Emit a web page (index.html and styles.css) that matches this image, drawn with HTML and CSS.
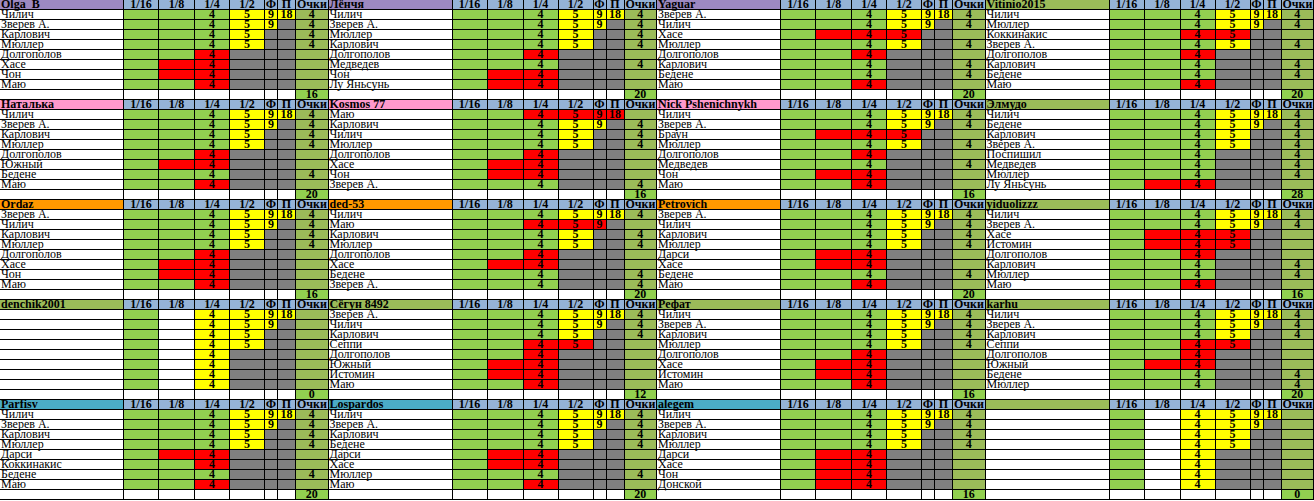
FILE: index.html
```html
<!DOCTYPE html>
<html lang="ru">
<head>
<meta charset="utf-8">
<title>Прогнозы</title>
<link rel="stylesheet" href="styles.css">
</head>
<body>
<div class="sheet">

<table class="blk">
<tr><th class="n pu">Olga_B</th><th>1/16</th><th>1/8</th><th>1/4</th><th>1/2</th><th>Ф</th><th>П</th><th>Очки</th></tr>
<tr><td class="n">Чилич</td><td class="g"></td><td class="g"></td><td class="g">4</td><td class="y">5</td><td class="y">9</td><td class="y">18</td><td class="o">4</td></tr>
<tr><td class="n">Зверев А.</td><td class="g"></td><td class="g"></td><td class="g">4</td><td class="y">5</td><td class="y">9</td><td class="k"></td><td class="o">4</td></tr>
<tr><td class="n">Карлович</td><td class="g"></td><td class="g"></td><td class="g">4</td><td class="y">5</td><td class="k"></td><td class="k"></td><td class="o">4</td></tr>
<tr><td class="n">Мюллер</td><td class="g"></td><td class="g"></td><td class="g">4</td><td class="y">5</td><td class="k"></td><td class="k"></td><td class="o">4</td></tr>
<tr><td class="n">Долгополов</td><td class="g"></td><td class="g"></td><td class="r">4</td><td class="k"></td><td class="k"></td><td class="k"></td><td class="o"></td></tr>
<tr><td class="n">Хасе</td><td class="g"></td><td class="r"></td><td class="r">4</td><td class="k"></td><td class="k"></td><td class="k"></td><td class="o"></td></tr>
<tr><td class="n">Чон</td><td class="g"></td><td class="r"></td><td class="r">4</td><td class="k"></td><td class="k"></td><td class="k"></td><td class="o"></td></tr>
<tr><td class="n">Маю</td><td class="g"></td><td class="g"></td><td class="r">4</td><td class="k"></td><td class="k"></td><td class="k"></td><td class="o"></td></tr>
<tr><td class="n"></td><td></td><td></td><td></td><td></td><td></td><td></td><td class="t">16</td></tr>
</table>

<table class="blk">
<tr><th class="n pu">Лёнчя</th><th>1/16</th><th>1/8</th><th>1/4</th><th>1/2</th><th>Ф</th><th>П</th><th>Очки</th></tr>
<tr><td class="n">Чилич</td><td class="g"></td><td class="g"></td><td class="g">4</td><td class="y">5</td><td class="y">9</td><td class="y">18</td><td class="o">4</td></tr>
<tr><td class="n">Зверев А.</td><td class="g"></td><td class="g"></td><td class="g">4</td><td class="y">5</td><td class="y">9</td><td class="k"></td><td class="o">4</td></tr>
<tr><td class="n">Мюллер</td><td class="g"></td><td class="g"></td><td class="g">4</td><td class="y">5</td><td class="k"></td><td class="k"></td><td class="o">4</td></tr>
<tr><td class="n">Карлович</td><td class="g"></td><td class="g"></td><td class="g">4</td><td class="y">5</td><td class="k"></td><td class="k"></td><td class="o">4</td></tr>
<tr><td class="n">Долгополов</td><td class="g"></td><td class="g"></td><td class="r">4</td><td class="k"></td><td class="k"></td><td class="k"></td><td class="o"></td></tr>
<tr><td class="n">Медведев</td><td class="g"></td><td class="g"></td><td class="g">4</td><td class="k"></td><td class="k"></td><td class="k"></td><td class="o">4</td></tr>
<tr><td class="n">Чон</td><td class="g"></td><td class="r"></td><td class="r">4</td><td class="k"></td><td class="k"></td><td class="k"></td><td class="o"></td></tr>
<tr><td class="n">Лу Яньсунь</td><td class="g"></td><td class="r"></td><td class="r">4</td><td class="k"></td><td class="k"></td><td class="k"></td><td class="o"></td></tr>
<tr><td class="n"></td><td></td><td></td><td></td><td></td><td></td><td></td><td class="t">20</td></tr>
</table>

<table class="blk">
<tr><th class="n pu">Yaguar</th><th>1/16</th><th>1/8</th><th>1/4</th><th>1/2</th><th>Ф</th><th>П</th><th>Очки</th></tr>
<tr><td class="n">Зверев А.</td><td class="g"></td><td class="g"></td><td class="g">4</td><td class="y">5</td><td class="y">9</td><td class="y">18</td><td class="o">4</td></tr>
<tr><td class="n">Чилич</td><td class="g"></td><td class="g"></td><td class="g">4</td><td class="y">5</td><td class="y">9</td><td class="k"></td><td class="o">4</td></tr>
<tr><td class="n">Хасе</td><td class="g"></td><td class="r"></td><td class="r">4</td><td class="r">5</td><td class="k"></td><td class="k"></td><td class="o"></td></tr>
<tr><td class="n">Мюллер</td><td class="g"></td><td class="g"></td><td class="g">4</td><td class="y">5</td><td class="k"></td><td class="k"></td><td class="o">4</td></tr>
<tr><td class="n">Долгополов</td><td class="g"></td><td class="g"></td><td class="r">4</td><td class="k"></td><td class="k"></td><td class="k"></td><td class="o"></td></tr>
<tr><td class="n">Карлович</td><td class="g"></td><td class="g"></td><td class="g">4</td><td class="k"></td><td class="k"></td><td class="k"></td><td class="o">4</td></tr>
<tr><td class="n">Бедене</td><td class="g"></td><td class="g"></td><td class="g">4</td><td class="k"></td><td class="k"></td><td class="k"></td><td class="o">4</td></tr>
<tr><td class="n">Маю</td><td class="g"></td><td class="g"></td><td class="r">4</td><td class="k"></td><td class="k"></td><td class="k"></td><td class="o"></td></tr>
<tr><td class="n"></td><td></td><td></td><td></td><td></td><td></td><td></td><td class="t">20</td></tr>
</table>

<table class="blk">
<tr><th class="n ol">Vitinio2015</th><th>1/16</th><th>1/8</th><th>1/4</th><th>1/2</th><th>Ф</th><th>П</th><th>Очки</th></tr>
<tr><td class="n">Чилич</td><td class="g"></td><td class="g"></td><td class="g">4</td><td class="y">5</td><td class="y">9</td><td class="y">18</td><td class="o">4</td></tr>
<tr><td class="n">Мюллер</td><td class="g"></td><td class="g"></td><td class="g">4</td><td class="y">5</td><td class="y">9</td><td class="k"></td><td class="o">4</td></tr>
<tr><td class="n">Коккинакис</td><td class="g"></td><td class="g"></td><td class="r">4</td><td class="r">5</td><td class="k"></td><td class="k"></td><td class="o"></td></tr>
<tr><td class="n">Зверев А.</td><td class="g"></td><td class="g"></td><td class="g">4</td><td class="y">5</td><td class="k"></td><td class="k"></td><td class="o">4</td></tr>
<tr><td class="n">Долгополов</td><td class="g"></td><td class="g"></td><td class="r">4</td><td class="k"></td><td class="k"></td><td class="k"></td><td class="o"></td></tr>
<tr><td class="n">Карлович</td><td class="g"></td><td class="g"></td><td class="g">4</td><td class="k"></td><td class="k"></td><td class="k"></td><td class="o">4</td></tr>
<tr><td class="n">Бедене</td><td class="g"></td><td class="g"></td><td class="g">4</td><td class="k"></td><td class="k"></td><td class="k"></td><td class="o">4</td></tr>
<tr><td class="n">Маю</td><td class="g"></td><td class="g"></td><td class="r">4</td><td class="k"></td><td class="k"></td><td class="k"></td><td class="o"></td></tr>
<tr><td class="n"></td><td></td><td></td><td></td><td></td><td></td><td></td><td class="t">20</td></tr>
</table>

<table class="blk">
<tr><th class="n pk">Наталька</th><th>1/16</th><th>1/8</th><th>1/4</th><th>1/2</th><th>Ф</th><th>П</th><th>Очки</th></tr>
<tr><td class="n">Чилич</td><td class="g"></td><td class="g"></td><td class="g">4</td><td class="y">5</td><td class="y">9</td><td class="y">18</td><td class="o">4</td></tr>
<tr><td class="n">Зверев А.</td><td class="g"></td><td class="g"></td><td class="g">4</td><td class="y">5</td><td class="y">9</td><td class="k"></td><td class="o">4</td></tr>
<tr><td class="n">Карлович</td><td class="g"></td><td class="g"></td><td class="g">4</td><td class="y">5</td><td class="k"></td><td class="k"></td><td class="o">4</td></tr>
<tr><td class="n">Мюллер</td><td class="g"></td><td class="g"></td><td class="g">4</td><td class="y">5</td><td class="k"></td><td class="k"></td><td class="o">4</td></tr>
<tr><td class="n">Долгополов</td><td class="g"></td><td class="g"></td><td class="r">4</td><td class="k"></td><td class="k"></td><td class="k"></td><td class="o"></td></tr>
<tr><td class="n">Южный</td><td class="g"></td><td class="r"></td><td class="r">4</td><td class="k"></td><td class="k"></td><td class="k"></td><td class="o"></td></tr>
<tr><td class="n">Бедене</td><td class="g"></td><td class="g"></td><td class="g">4</td><td class="k"></td><td class="k"></td><td class="k"></td><td class="o">4</td></tr>
<tr><td class="n">Маю</td><td class="g"></td><td class="g"></td><td class="r">4</td><td class="k"></td><td class="k"></td><td class="k"></td><td class="o"></td></tr>
<tr><td class="n"></td><td></td><td></td><td></td><td></td><td></td><td></td><td class="t">20</td></tr>
</table>

<table class="blk">
<tr><th class="n pk">Kosmos 77</th><th>1/16</th><th>1/8</th><th>1/4</th><th>1/2</th><th>Ф</th><th>П</th><th>Очки</th></tr>
<tr><td class="n">Маю</td><td class="g"></td><td class="g"></td><td class="r">4</td><td class="r">5</td><td class="r">9</td><td class="r">18</td><td class="o"></td></tr>
<tr><td class="n">Карлович</td><td class="g"></td><td class="g"></td><td class="g">4</td><td class="y">5</td><td class="y">9</td><td class="k"></td><td class="o">4</td></tr>
<tr><td class="n">Чилич</td><td class="g"></td><td class="g"></td><td class="g">4</td><td class="y">5</td><td class="k"></td><td class="k"></td><td class="o">4</td></tr>
<tr><td class="n">Мюллер</td><td class="g"></td><td class="g"></td><td class="g">4</td><td class="y">5</td><td class="k"></td><td class="k"></td><td class="o">4</td></tr>
<tr><td class="n">Долгополов</td><td class="g"></td><td class="g"></td><td class="r">4</td><td class="k"></td><td class="k"></td><td class="k"></td><td class="o"></td></tr>
<tr><td class="n">Хасе</td><td class="g"></td><td class="r"></td><td class="r">4</td><td class="k"></td><td class="k"></td><td class="k"></td><td class="o"></td></tr>
<tr><td class="n">Чон</td><td class="g"></td><td class="r"></td><td class="r">4</td><td class="k"></td><td class="k"></td><td class="k"></td><td class="o"></td></tr>
<tr><td class="n">Зверев А.</td><td class="g"></td><td class="g"></td><td class="g">4</td><td class="k"></td><td class="k"></td><td class="k"></td><td class="o">4</td></tr>
<tr><td class="n"></td><td></td><td></td><td></td><td></td><td></td><td></td><td class="t">16</td></tr>
</table>

<table class="blk">
<tr><th class="n pk">Nick Pshenichnykh</th><th>1/16</th><th>1/8</th><th>1/4</th><th>1/2</th><th>Ф</th><th>П</th><th>Очки</th></tr>
<tr><td class="n">Чилич</td><td class="g"></td><td class="g"></td><td class="g">4</td><td class="y">5</td><td class="y">9</td><td class="y">18</td><td class="o">4</td></tr>
<tr><td class="n">Зверев А.</td><td class="g"></td><td class="g"></td><td class="g">4</td><td class="y">5</td><td class="y">9</td><td class="k"></td><td class="o">4</td></tr>
<tr><td class="n">Браун</td><td class="g"></td><td class="r"></td><td class="r">4</td><td class="r">5</td><td class="k"></td><td class="k"></td><td class="o"></td></tr>
<tr><td class="n">Мюллер</td><td class="g"></td><td class="g"></td><td class="g">4</td><td class="y">5</td><td class="k"></td><td class="k"></td><td class="o">4</td></tr>
<tr><td class="n">Долгополов</td><td class="g"></td><td class="g"></td><td class="r">4</td><td class="k"></td><td class="k"></td><td class="k"></td><td class="o"></td></tr>
<tr><td class="n">Медведев</td><td class="g"></td><td class="g"></td><td class="g">4</td><td class="k"></td><td class="k"></td><td class="k"></td><td class="o">4</td></tr>
<tr><td class="n">Чон</td><td class="g"></td><td class="r"></td><td class="r">4</td><td class="k"></td><td class="k"></td><td class="k"></td><td class="o"></td></tr>
<tr><td class="n">Маю</td><td class="g"></td><td class="g"></td><td class="r">4</td><td class="k"></td><td class="k"></td><td class="k"></td><td class="o"></td></tr>
<tr><td class="n"></td><td></td><td></td><td></td><td></td><td></td><td></td><td class="t">16</td></tr>
</table>

<table class="blk">
<tr><th class="n ol">Элмудо</th><th>1/16</th><th>1/8</th><th>1/4</th><th>1/2</th><th>Ф</th><th>П</th><th>Очки</th></tr>
<tr><td class="n">Чилич</td><td class="g"></td><td class="g"></td><td class="g">4</td><td class="y">5</td><td class="y">9</td><td class="y">18</td><td class="o">4</td></tr>
<tr><td class="n">Бедене</td><td class="g"></td><td class="g"></td><td class="g">4</td><td class="y">5</td><td class="y">9</td><td class="k"></td><td class="o">4</td></tr>
<tr><td class="n">Карлович</td><td class="g"></td><td class="g"></td><td class="g">4</td><td class="y">5</td><td class="k"></td><td class="k"></td><td class="o">4</td></tr>
<tr><td class="n">Зверев А.</td><td class="g"></td><td class="g"></td><td class="g">4</td><td class="y">5</td><td class="k"></td><td class="k"></td><td class="o">4</td></tr>
<tr><td class="n">Поспишил</td><td class="g"></td><td class="g"></td><td class="g">4</td><td class="k"></td><td class="k"></td><td class="k"></td><td class="o">4</td></tr>
<tr><td class="n">Медведев</td><td class="g"></td><td class="g"></td><td class="g">4</td><td class="k"></td><td class="k"></td><td class="k"></td><td class="o">4</td></tr>
<tr><td class="n">Мюллер</td><td class="g"></td><td class="g"></td><td class="g">4</td><td class="k"></td><td class="k"></td><td class="k"></td><td class="o">4</td></tr>
<tr><td class="n">Лу Яньсунь</td><td class="g"></td><td class="r"></td><td class="r">4</td><td class="k"></td><td class="k"></td><td class="k"></td><td class="o"></td></tr>
<tr><td class="n"></td><td></td><td></td><td></td><td></td><td></td><td></td><td class="t">28</td></tr>
</table>

<table class="blk">
<tr><th class="n or">Ordaz</th><th>1/16</th><th>1/8</th><th>1/4</th><th>1/2</th><th>Ф</th><th>П</th><th>Очки</th></tr>
<tr><td class="n">Зверев А.</td><td class="g"></td><td class="g"></td><td class="g">4</td><td class="y">5</td><td class="y">9</td><td class="y">18</td><td class="o">4</td></tr>
<tr><td class="n">Чилич</td><td class="g"></td><td class="g"></td><td class="g">4</td><td class="y">5</td><td class="y">9</td><td class="k"></td><td class="o">4</td></tr>
<tr><td class="n">Карлович</td><td class="g"></td><td class="g"></td><td class="g">4</td><td class="y">5</td><td class="k"></td><td class="k"></td><td class="o">4</td></tr>
<tr><td class="n">Мюллер</td><td class="g"></td><td class="g"></td><td class="g">4</td><td class="y">5</td><td class="k"></td><td class="k"></td><td class="o">4</td></tr>
<tr><td class="n">Долгополов</td><td class="g"></td><td class="g"></td><td class="r">4</td><td class="k"></td><td class="k"></td><td class="k"></td><td class="o"></td></tr>
<tr><td class="n">Хасе</td><td class="g"></td><td class="r"></td><td class="r">4</td><td class="k"></td><td class="k"></td><td class="k"></td><td class="o"></td></tr>
<tr><td class="n">Чон</td><td class="g"></td><td class="r"></td><td class="r">4</td><td class="k"></td><td class="k"></td><td class="k"></td><td class="o"></td></tr>
<tr><td class="n">Маю</td><td class="g"></td><td class="g"></td><td class="r">4</td><td class="k"></td><td class="k"></td><td class="k"></td><td class="o"></td></tr>
<tr><td class="n"></td><td></td><td></td><td></td><td></td><td></td><td></td><td class="t">16</td></tr>
</table>

<table class="blk">
<tr><th class="n or">ded-53</th><th>1/16</th><th>1/8</th><th>1/4</th><th>1/2</th><th>Ф</th><th>П</th><th>Очки</th></tr>
<tr><td class="n">Чилич</td><td class="g"></td><td class="g"></td><td class="g">4</td><td class="y">5</td><td class="y">9</td><td class="y">18</td><td class="o">4</td></tr>
<tr><td class="n">Маю</td><td class="g"></td><td class="g"></td><td class="r">4</td><td class="r">5</td><td class="r">9</td><td class="k"></td><td class="o"></td></tr>
<tr><td class="n">Карлович</td><td class="g"></td><td class="g"></td><td class="g">4</td><td class="y">5</td><td class="k"></td><td class="k"></td><td class="o">4</td></tr>
<tr><td class="n">Мюллер</td><td class="g"></td><td class="g"></td><td class="g">4</td><td class="y">5</td><td class="k"></td><td class="k"></td><td class="o">4</td></tr>
<tr><td class="n">Долгополов</td><td class="g"></td><td class="g"></td><td class="r">4</td><td class="k"></td><td class="k"></td><td class="k"></td><td class="o"></td></tr>
<tr><td class="n">Хасе</td><td class="g"></td><td class="r"></td><td class="r">4</td><td class="k"></td><td class="k"></td><td class="k"></td><td class="o"></td></tr>
<tr><td class="n">Бедене</td><td class="g"></td><td class="g"></td><td class="g">4</td><td class="k"></td><td class="k"></td><td class="k"></td><td class="o">4</td></tr>
<tr><td class="n">Зверев А.</td><td class="g"></td><td class="g"></td><td class="g">4</td><td class="k"></td><td class="k"></td><td class="k"></td><td class="o">4</td></tr>
<tr><td class="n"></td><td></td><td></td><td></td><td></td><td></td><td></td><td class="t">20</td></tr>
</table>

<table class="blk">
<tr><th class="n or">Petrovich</th><th>1/16</th><th>1/8</th><th>1/4</th><th>1/2</th><th>Ф</th><th>П</th><th>Очки</th></tr>
<tr><td class="n">Зверев А.</td><td class="g"></td><td class="g"></td><td class="g">4</td><td class="y">5</td><td class="y">9</td><td class="y">18</td><td class="o">4</td></tr>
<tr><td class="n">Чилич</td><td class="g"></td><td class="g"></td><td class="g">4</td><td class="y">5</td><td class="y">9</td><td class="k"></td><td class="o">4</td></tr>
<tr><td class="n">Карлович</td><td class="g"></td><td class="g"></td><td class="g">4</td><td class="y">5</td><td class="k"></td><td class="k"></td><td class="o">4</td></tr>
<tr><td class="n">Мюллер</td><td class="g"></td><td class="g"></td><td class="g">4</td><td class="y">5</td><td class="k"></td><td class="k"></td><td class="o">4</td></tr>
<tr><td class="n">Дарси</td><td class="g"></td><td class="r"></td><td class="r">4</td><td class="k"></td><td class="k"></td><td class="k"></td><td class="o"></td></tr>
<tr><td class="n">Хасе</td><td class="g"></td><td class="r"></td><td class="r">4</td><td class="k"></td><td class="k"></td><td class="k"></td><td class="o"></td></tr>
<tr><td class="n">Бедене</td><td class="g"></td><td class="g"></td><td class="g">4</td><td class="k"></td><td class="k"></td><td class="k"></td><td class="o">4</td></tr>
<tr><td class="n">Маю</td><td class="g"></td><td class="g"></td><td class="r">4</td><td class="k"></td><td class="k"></td><td class="k"></td><td class="o"></td></tr>
<tr><td class="n"></td><td></td><td></td><td></td><td></td><td></td><td></td><td class="t">20</td></tr>
</table>

<table class="blk">
<tr><th class="n ol">yiduolizzz</th><th>1/16</th><th>1/8</th><th>1/4</th><th>1/2</th><th>Ф</th><th>П</th><th>Очки</th></tr>
<tr><td class="n">Чилич</td><td class="g"></td><td class="g"></td><td class="g">4</td><td class="y">5</td><td class="y">9</td><td class="y">18</td><td class="o">4</td></tr>
<tr><td class="n">Зверев А.</td><td class="g"></td><td class="g"></td><td class="g">4</td><td class="y">5</td><td class="y">9</td><td class="k"></td><td class="o">4</td></tr>
<tr><td class="n">Хасе</td><td class="g"></td><td class="r"></td><td class="r">4</td><td class="r">5</td><td class="k"></td><td class="k"></td><td class="o"></td></tr>
<tr><td class="n">Истомин</td><td class="g"></td><td class="r"></td><td class="r">4</td><td class="r">5</td><td class="k"></td><td class="k"></td><td class="o"></td></tr>
<tr><td class="n">Долгополов</td><td class="g"></td><td class="g"></td><td class="r">4</td><td class="k"></td><td class="k"></td><td class="k"></td><td class="o"></td></tr>
<tr><td class="n">Карлович</td><td class="g"></td><td class="g"></td><td class="g">4</td><td class="k"></td><td class="k"></td><td class="k"></td><td class="o">4</td></tr>
<tr><td class="n">Мюллер</td><td class="g"></td><td class="g"></td><td class="g">4</td><td class="k"></td><td class="k"></td><td class="k"></td><td class="o">4</td></tr>
<tr><td class="n">Маю</td><td class="g"></td><td class="g"></td><td class="r">4</td><td class="k"></td><td class="k"></td><td class="k"></td><td class="o"></td></tr>
<tr><td class="n"></td><td></td><td></td><td></td><td></td><td></td><td></td><td class="t">16</td></tr>
</table>

<table class="blk">
<tr><th class="n ol">denchik2001</th><th>1/16</th><th>1/8</th><th>1/4</th><th>1/2</th><th>Ф</th><th>П</th><th>Очки</th></tr>
<tr><td class="n"></td><td class="g"></td><td></td><td class="y">4</td><td class="y">5</td><td class="y">9</td><td class="y">18</td><td class="o"></td></tr>
<tr><td class="n"></td><td class="g"></td><td></td><td class="y">4</td><td class="y">5</td><td class="y">9</td><td class="k"></td><td class="o"></td></tr>
<tr><td class="n"></td><td class="g"></td><td></td><td class="y">4</td><td class="y">5</td><td class="k"></td><td class="k"></td><td class="o"></td></tr>
<tr><td class="n"></td><td class="g"></td><td></td><td class="y">4</td><td class="y">5</td><td class="k"></td><td class="k"></td><td class="o"></td></tr>
<tr><td class="n"></td><td class="g"></td><td></td><td class="y">4</td><td class="k"></td><td class="k"></td><td class="k"></td><td class="o"></td></tr>
<tr><td class="n"></td><td class="g"></td><td></td><td class="y">4</td><td class="k"></td><td class="k"></td><td class="k"></td><td class="o"></td></tr>
<tr><td class="n"></td><td class="g"></td><td></td><td class="y">4</td><td class="k"></td><td class="k"></td><td class="k"></td><td class="o"></td></tr>
<tr><td class="n"></td><td class="g"></td><td></td><td class="y">4</td><td class="k"></td><td class="k"></td><td class="k"></td><td class="o"></td></tr>
<tr><td class="n"></td><td></td><td></td><td></td><td></td><td></td><td></td><td class="t">0</td></tr>
</table>

<table class="blk">
<tr><th class="n ol">Сёгун 8492</th><th>1/16</th><th>1/8</th><th>1/4</th><th>1/2</th><th>Ф</th><th>П</th><th>Очки</th></tr>
<tr><td class="n">Зверев А.</td><td class="g"></td><td class="g"></td><td class="g">4</td><td class="y">5</td><td class="y">9</td><td class="y">18</td><td class="o">4</td></tr>
<tr><td class="n">Чилич</td><td class="g"></td><td class="g"></td><td class="g">4</td><td class="y">5</td><td class="y">9</td><td class="k"></td><td class="o">4</td></tr>
<tr><td class="n">Карлович</td><td class="g"></td><td class="g"></td><td class="g">4</td><td class="y">5</td><td class="k"></td><td class="k"></td><td class="o">4</td></tr>
<tr><td class="n">Сеппи</td><td class="g"></td><td class="g"></td><td class="r">4</td><td class="r">5</td><td class="k"></td><td class="k"></td><td class="o"></td></tr>
<tr><td class="n">Долгополов</td><td class="g"></td><td class="g"></td><td class="r">4</td><td class="k"></td><td class="k"></td><td class="k"></td><td class="o"></td></tr>
<tr><td class="n">Южный</td><td class="g"></td><td class="r"></td><td class="r">4</td><td class="k"></td><td class="k"></td><td class="k"></td><td class="o"></td></tr>
<tr><td class="n">Истомин</td><td class="g"></td><td class="r"></td><td class="r">4</td><td class="k"></td><td class="k"></td><td class="k"></td><td class="o"></td></tr>
<tr><td class="n">Маю</td><td class="g"></td><td class="g"></td><td class="r">4</td><td class="k"></td><td class="k"></td><td class="k"></td><td class="o"></td></tr>
<tr><td class="n"></td><td></td><td></td><td></td><td></td><td></td><td></td><td class="t">12</td></tr>
</table>

<table class="blk">
<tr><th class="n ol">Рефат</th><th>1/16</th><th>1/8</th><th>1/4</th><th>1/2</th><th>Ф</th><th>П</th><th>Очки</th></tr>
<tr><td class="n">Чилич</td><td class="g"></td><td class="g"></td><td class="g">4</td><td class="y">5</td><td class="y">9</td><td class="y">18</td><td class="o">4</td></tr>
<tr><td class="n">Зверев А.</td><td class="g"></td><td class="g"></td><td class="g">4</td><td class="y">5</td><td class="y">9</td><td class="k"></td><td class="o">4</td></tr>
<tr><td class="n">Карлович</td><td class="g"></td><td class="g"></td><td class="g">4</td><td class="y">5</td><td class="k"></td><td class="k"></td><td class="o">4</td></tr>
<tr><td class="n">Мюллер</td><td class="g"></td><td class="g"></td><td class="g">4</td><td class="y">5</td><td class="k"></td><td class="k"></td><td class="o">4</td></tr>
<tr><td class="n">Долгополов</td><td class="g"></td><td class="g"></td><td class="r">4</td><td class="k"></td><td class="k"></td><td class="k"></td><td class="o"></td></tr>
<tr><td class="n">Хасе</td><td class="g"></td><td class="r"></td><td class="r">4</td><td class="k"></td><td class="k"></td><td class="k"></td><td class="o"></td></tr>
<tr><td class="n">Истомин</td><td class="g"></td><td class="r"></td><td class="r">4</td><td class="k"></td><td class="k"></td><td class="k"></td><td class="o"></td></tr>
<tr><td class="n">Маю</td><td class="g"></td><td class="g"></td><td class="r">4</td><td class="k"></td><td class="k"></td><td class="k"></td><td class="o"></td></tr>
<tr><td class="n"></td><td></td><td></td><td></td><td></td><td></td><td></td><td class="t">16</td></tr>
</table>

<table class="blk">
<tr><th class="n ol">karhu</th><th>1/16</th><th>1/8</th><th>1/4</th><th>1/2</th><th>Ф</th><th>П</th><th>Очки</th></tr>
<tr><td class="n">Чилич</td><td class="g"></td><td class="g"></td><td class="g">4</td><td class="y">5</td><td class="y">9</td><td class="y">18</td><td class="o">4</td></tr>
<tr><td class="n">Зверев А.</td><td class="g"></td><td class="g"></td><td class="g">4</td><td class="y">5</td><td class="y">9</td><td class="k"></td><td class="o">4</td></tr>
<tr><td class="n">Карлович</td><td class="g"></td><td class="g"></td><td class="g">4</td><td class="y">5</td><td class="k"></td><td class="k"></td><td class="o">4</td></tr>
<tr><td class="n">Сеппи</td><td class="g"></td><td class="g"></td><td class="r">4</td><td class="r">5</td><td class="k"></td><td class="k"></td><td class="o"></td></tr>
<tr><td class="n">Долгополов</td><td class="g"></td><td class="g"></td><td class="r">4</td><td class="k"></td><td class="k"></td><td class="k"></td><td class="o"></td></tr>
<tr><td class="n">Южный</td><td class="g"></td><td class="r"></td><td class="r">4</td><td class="k"></td><td class="k"></td><td class="k"></td><td class="o"></td></tr>
<tr><td class="n">Бедене</td><td class="g"></td><td class="g"></td><td class="g">4</td><td class="k"></td><td class="k"></td><td class="k"></td><td class="o">4</td></tr>
<tr><td class="n">Мюллер</td><td class="g"></td><td class="g"></td><td class="g">4</td><td class="k"></td><td class="k"></td><td class="k"></td><td class="o">4</td></tr>
<tr><td class="n"></td><td></td><td></td><td></td><td></td><td></td><td></td><td class="t">20</td></tr>
</table>

<table class="blk">
<tr><th class="n te">Parfisv</th><th>1/16</th><th>1/8</th><th>1/4</th><th>1/2</th><th>Ф</th><th>П</th><th>Очки</th></tr>
<tr><td class="n">Чилич</td><td class="g"></td><td class="g"></td><td class="g">4</td><td class="y">5</td><td class="y">9</td><td class="y">18</td><td class="o">4</td></tr>
<tr><td class="n">Зверев А.</td><td class="g"></td><td class="g"></td><td class="g">4</td><td class="y">5</td><td class="y">9</td><td class="k"></td><td class="o">4</td></tr>
<tr><td class="n">Карлович</td><td class="g"></td><td class="g"></td><td class="g">4</td><td class="y">5</td><td class="k"></td><td class="k"></td><td class="o">4</td></tr>
<tr><td class="n">Мюллер</td><td class="g"></td><td class="g"></td><td class="g">4</td><td class="y">5</td><td class="k"></td><td class="k"></td><td class="o">4</td></tr>
<tr><td class="n">Дарси</td><td class="g"></td><td class="r"></td><td class="r">4</td><td class="k"></td><td class="k"></td><td class="k"></td><td class="o"></td></tr>
<tr><td class="n">Коккинакис</td><td class="g"></td><td class="g"></td><td class="r">4</td><td class="k"></td><td class="k"></td><td class="k"></td><td class="o"></td></tr>
<tr><td class="n">Бедене</td><td class="g"></td><td class="g"></td><td class="g">4</td><td class="k"></td><td class="k"></td><td class="k"></td><td class="o">4</td></tr>
<tr><td class="n">Маю</td><td class="g"></td><td class="g"></td><td class="r">4</td><td class="k"></td><td class="k"></td><td class="k"></td><td class="o"></td></tr>
<tr><td class="n"></td><td></td><td></td><td></td><td></td><td></td><td></td><td class="t">20</td></tr>
</table>

<table class="blk">
<tr><th class="n te">Lospardos</th><th>1/16</th><th>1/8</th><th>1/4</th><th>1/2</th><th>Ф</th><th>П</th><th>Очки</th></tr>
<tr><td class="n">Чилич</td><td class="g"></td><td class="g"></td><td class="g">4</td><td class="y">5</td><td class="y">9</td><td class="y">18</td><td class="o">4</td></tr>
<tr><td class="n">Зверев А.</td><td class="g"></td><td class="g"></td><td class="g">4</td><td class="y">5</td><td class="y">9</td><td class="k"></td><td class="o">4</td></tr>
<tr><td class="n">Карлович</td><td class="g"></td><td class="g"></td><td class="g">4</td><td class="y">5</td><td class="k"></td><td class="k"></td><td class="o">4</td></tr>
<tr><td class="n">Бедене</td><td class="g"></td><td class="g"></td><td class="g">4</td><td class="y">5</td><td class="k"></td><td class="k"></td><td class="o">4</td></tr>
<tr><td class="n">Дарси</td><td class="g"></td><td class="r"></td><td class="r">4</td><td class="k"></td><td class="k"></td><td class="k"></td><td class="o"></td></tr>
<tr><td class="n">Хасе</td><td class="g"></td><td class="r"></td><td class="r">4</td><td class="k"></td><td class="k"></td><td class="k"></td><td class="o"></td></tr>
<tr><td class="n">Мюллер</td><td class="g"></td><td class="g"></td><td class="g">4</td><td class="k"></td><td class="k"></td><td class="k"></td><td class="o">4</td></tr>
<tr><td class="n">Маю</td><td class="g"></td><td class="g"></td><td class="r">4</td><td class="k"></td><td class="k"></td><td class="k"></td><td class="o"></td></tr>
<tr><td class="n"></td><td></td><td></td><td></td><td></td><td></td><td></td><td class="t">20</td></tr>
</table>

<table class="blk">
<tr><th class="n te">alegem</th><th>1/16</th><th>1/8</th><th>1/4</th><th>1/2</th><th>Ф</th><th>П</th><th>Очки</th></tr>
<tr><td class="n">Чилич</td><td class="g"></td><td class="g"></td><td class="g">4</td><td class="y">5</td><td class="y">9</td><td class="y">18</td><td class="o">4</td></tr>
<tr><td class="n">Зверев А.</td><td class="g"></td><td class="g"></td><td class="g">4</td><td class="y">5</td><td class="y">9</td><td class="k"></td><td class="o">4</td></tr>
<tr><td class="n">Карлович</td><td class="g"></td><td class="g"></td><td class="g">4</td><td class="y">5</td><td class="k"></td><td class="k"></td><td class="o">4</td></tr>
<tr><td class="n">Мюллер</td><td class="g"></td><td class="g"></td><td class="g">4</td><td class="y">5</td><td class="k"></td><td class="k"></td><td class="o">4</td></tr>
<tr><td class="n">Дарси</td><td class="g"></td><td class="r"></td><td class="r">4</td><td class="k"></td><td class="k"></td><td class="k"></td><td class="o"></td></tr>
<tr><td class="n">Хасе</td><td class="g"></td><td class="r"></td><td class="r">4</td><td class="k"></td><td class="k"></td><td class="k"></td><td class="o"></td></tr>
<tr><td class="n">Чон</td><td class="g"></td><td class="r"></td><td class="r">4</td><td class="k"></td><td class="k"></td><td class="k"></td><td class="o"></td></tr>
<tr><td class="n">Донской</td><td class="g"></td><td class="r"></td><td class="r">4</td><td class="k"></td><td class="k"></td><td class="k"></td><td class="o"></td></tr>
<tr><td class="n"></td><td></td><td></td><td></td><td></td><td></td><td></td><td class="t">16</td></tr>
</table>

<table class="blk">
<tr><th class="n ol"></th><th>1/16</th><th>1/8</th><th>1/4</th><th>1/2</th><th>Ф</th><th>П</th><th>Очки</th></tr>
<tr><td class="n"></td><td class="g"></td><td></td><td class="y">4</td><td class="y">5</td><td class="y">9</td><td class="y">18</td><td class="o"></td></tr>
<tr><td class="n"></td><td class="g"></td><td></td><td class="y">4</td><td class="y">5</td><td class="y">9</td><td class="k"></td><td class="o"></td></tr>
<tr><td class="n"></td><td class="g"></td><td></td><td class="y">4</td><td class="y">5</td><td class="k"></td><td class="k"></td><td class="o"></td></tr>
<tr><td class="n"></td><td class="g"></td><td></td><td class="y">4</td><td class="y">5</td><td class="k"></td><td class="k"></td><td class="o"></td></tr>
<tr><td class="n"></td><td class="g"></td><td></td><td class="y">4</td><td class="k"></td><td class="k"></td><td class="k"></td><td class="o"></td></tr>
<tr><td class="n"></td><td class="g"></td><td></td><td class="y">4</td><td class="k"></td><td class="k"></td><td class="k"></td><td class="o"></td></tr>
<tr><td class="n"></td><td class="g"></td><td></td><td class="y">4</td><td class="k"></td><td class="k"></td><td class="k"></td><td class="o"></td></tr>
<tr><td class="n"></td><td class="g"></td><td></td><td class="y">4</td><td class="k"></td><td class="k"></td><td class="k"></td><td class="o"></td></tr>
<tr><td class="n"></td><td></td><td></td><td></td><td></td><td></td><td></td><td class="t">0</td></tr>
</table>

</div>
</body>
</html>
```

FILE: styles.css
```css
* {
  box-sizing: border-box;
}

body {
  margin: 0;
  background: #ffffff;
  color: #000000;
  font-family: "Liberation Serif", "Times New Roman", serif;
  font-size: 12px;
}

.sheet {
  display: grid;
  grid-template-columns: repeat(4, 1fr);
  width: 1314px;
}

.blk {
  width: 100%;
  border-collapse: separate;
  border-spacing: 0;
  table-layout: fixed;
}

.blk tr {
  height: 10px;
}

.blk th,
.blk td {
  height: 10px;
  padding: 0;
  border-right: 1px solid #000;
  border-bottom: 1px solid #000;
  background: #ffffff;
  font-size: 12px;
  line-height: 9px;
  font-weight: bold;
  text-align: center;
  vertical-align: bottom;
  white-space: nowrap;
  overflow: visible;
}

.blk th {
  background: #95b3d7;
}

.blk th:nth-child(1) { width: 124px; }
.blk th:nth-child(2) { width: 35px; }
.blk th:nth-child(3) { width: 36px; }
.blk th:nth-child(4) { width: 35px; }
.blk th:nth-child(5) { width: 35px; }
.blk th:nth-child(6) { width: 13px; }
.blk th:nth-child(7) { width: 18px; }
.blk th:nth-child(8) { text-align: left; padding-left: 1px; }

.blk .n {
  text-align: left;
  padding-left: 1px;
  font-weight: normal;
}

.blk th.n {
  font-weight: bold;
}

/* header name colours */
.blk th.pu { background: #9d89c1; }
.blk th.pk { background: #ff99cc; }
.blk th.or { background: #ff9900; }
.blk th.ol { background: #9bbb59; }
.blk th.te { background: #4bacc6; }

/* cell fills */
.blk .g { background: #92d050; }
.blk .y { background: #ffff00; }
.blk .r { background: #ff0000; }
.blk .k { background: #808080; }
.blk .o { background: #9bbb59; }
.blk .t { background: #92d050; }
```
